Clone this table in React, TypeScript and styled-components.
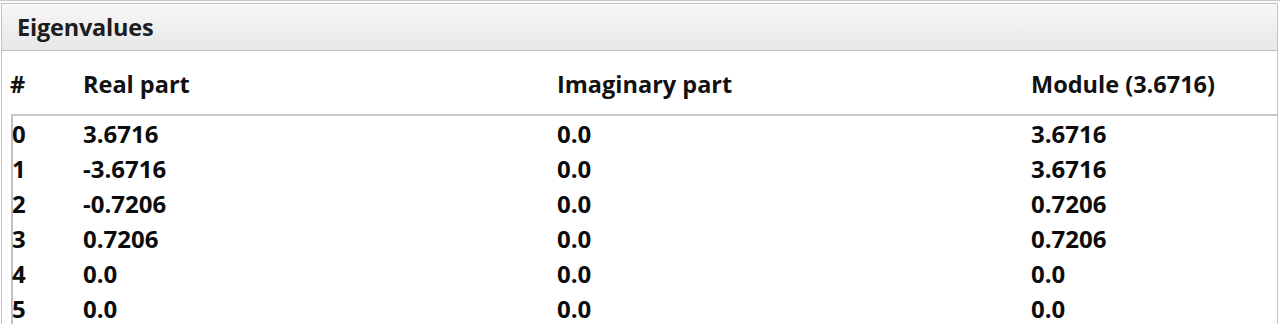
import React from "react";
import styled, { createGlobalStyle } from "styled-components";

const GlobalStyle = createGlobalStyle`
  html, body {
    margin: 0;
    padding: 0;
    background: #ffffff;
  }
  body {
    font-family: "Open Sans", "Noto Sans", "DejaVu Sans", sans-serif;
    color: #111111;
    overflow: hidden;
  }
`;

const TopStrip = styled.div`
  height: 3px;
  border-top: 1px solid #c9c9c9;
  box-sizing: border-box;
  background: #fbfbfb;
`;

const Panel = styled.section`
  margin: 0 2px 0 1px;
  border: 1px solid #c4c4c4;
  border-bottom: none;
  background: #ffffff;
`;

const PanelHeader = styled.header`
  height: 47px;
  box-sizing: border-box;
  display: flex;
  align-items: center;
  padding-left: 15px;
  background: linear-gradient(#f7f7f7, #e7e7e7);
  border-bottom: 1px solid #bcbcbc;
  font-size: 23.5px;
  font-weight: 700;
  color: #1d1d1d;
  letter-spacing: -0.2px;
`;

const TableArea = styled.div`
  padding-left: 9px;
`;

const columns = "72px 474px 474px 1fr";

const HeadRow = styled.div`
  display: grid;
  grid-template-columns: ${columns};
  height: 63px;
  align-items: center;
  font-size: 23.5px;
  font-weight: 700;
  color: #111111;
  padding-top: 2px;
  box-sizing: border-box;
`;

const Body = styled.div`
  border-left: 2px solid #c2c2c2;
  border-top: 2px solid #c8c8c8;
`;

const Row = styled.div`
  display: grid;
  grid-template-columns: ${columns};
  height: 35px;
  align-items: center;
  font-size: 24px;
  font-weight: 700;
  color: #0c0c0c;
`;

const Cell = styled.div<{ $shift?: number }>`
  white-space: nowrap;
  margin-left: ${(p) => p.$shift ?? 0}px;
`;

const rows: [string, string, string, string][] = [
  ["0", "3.6716", "0.0", "3.6716"],
  ["1", "-3.6716", "0.0", "3.6716"],
  ["2", "-0.7206", "0.0", "0.7206"],
  ["3", "0.7206", "0.0", "0.7206"],
  ["4", "0.0", "0.0", "0.0"],
  ["5", "0.0", "0.0", "0.0"],
];

export default function App() {
  return (
    <>
      <GlobalStyle />
      <TopStrip />
      <Panel>
        <PanelHeader>Eigenvalues</PanelHeader>
        <TableArea>
          <HeadRow>
            <Cell $shift={-1}>#</Cell>
            <Cell>Real part</Cell>
            <Cell>Imaginary part</Cell>
            <Cell>Module (3.6716)</Cell>
          </HeadRow>
          <Body>
            {rows.map((r) => (
              <Row key={r[0]}>
                <Cell $shift={-1}>{r[0]}</Cell>
                <Cell $shift={-2}>{r[1]}</Cell>
                <Cell $shift={-2}>{r[2]}</Cell>
                <Cell $shift={-2}>{r[3]}</Cell>
              </Row>
            ))}
          </Body>
        </TableArea>
      </Panel>
    </>
  );
}
